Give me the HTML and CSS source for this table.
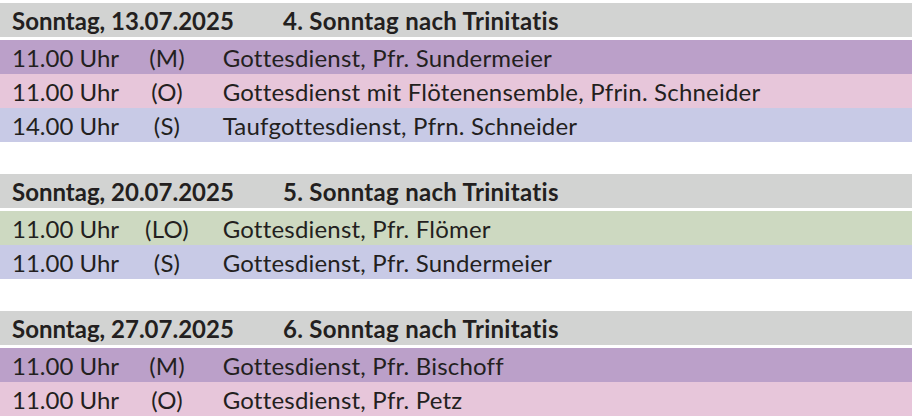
FILE: index.html
```html
<!DOCTYPE html>
<html lang="de">
<head>
<meta charset="utf-8">
<title>Gottesdienste</title>
<link rel="stylesheet" href="styles.css">
</head>
<body>
<main class="plan">
  <section class="day">
    <div class="day-head"><span class="date">Sonntag, 13.07.2025</span><span class="name">4. Sonntag nach Trinitatis</span></div>
    <div class="row purple"><span class="time">11.00 Uhr</span><span class="code">(M)</span><span class="desc">Gottesdienst, Pfr. Sundermeier</span></div>
    <div class="row pink"><span class="time">11.00 Uhr</span><span class="code">(O)</span><span class="desc">Gottesdienst mit Flötenensemble, Pfrin. Schneider</span></div>
    <div class="row blue"><span class="time">14.00 Uhr</span><span class="code">(S)</span><span class="desc">Taufgottesdienst, Pfrn. Schneider</span></div>
  </section>
  <section class="day">
    <div class="day-head"><span class="date">Sonntag, 20.07.2025</span><span class="name">5. Sonntag nach Trinitatis</span></div>
    <div class="row green"><span class="time">11.00 Uhr</span><span class="code">(LO)</span><span class="desc">Gottesdienst, Pfr. Flömer</span></div>
    <div class="row blue"><span class="time">11.00 Uhr</span><span class="code">(S)</span><span class="desc">Gottesdienst, Pfr. Sundermeier</span></div>
  </section>
  <section class="day">
    <div class="day-head"><span class="date">Sonntag, 27.07.2025</span><span class="name">6. Sonntag nach Trinitatis</span></div>
    <div class="row purple"><span class="time">11.00 Uhr</span><span class="code">(M)</span><span class="desc">Gottesdienst, Pfr. Bischoff</span></div>
    <div class="row pink"><span class="time">11.00 Uhr</span><span class="code">(O)</span><span class="desc">Gottesdienst, Pfr. Petz</span></div>
  </section>
</main>
</body>
</html>
```
FILE: styles.css
```css
html, body {
  margin: 0;
  padding: 0;
  background: #ffffff;
}
body {
  font-family: Lato, "Open Sans", sans-serif;
  font-size: 24px;
  letter-spacing: 0.2px;
  font-variant-ligatures: none;
  color: #231f20;
}
.plan {
  display: flex;
  flex-direction: column;
  gap: 32px;
  padding-top: 3px;
}
.day {
  display: flex;
  flex-direction: column;
}
.day-head {
  display: flex;
  align-items: center;
  height: 34px;
  margin-bottom: 3px;
  background: #d2d3d2;
  font-weight: bold;
  padding-left: 12px;
}
.day-head .date {
  width: 271px;
  flex: none;
  letter-spacing: 0;
}
.day-head .name {
  letter-spacing: 0.3px;
}
.row {
  display: grid;
  grid-template-columns: 118px 74px 1fr;
  align-items: center;
  height: 34px;
  padding-left: 12px;
}
.time {
  letter-spacing: 0;
}
.code {
  text-align: center;
}
.desc {
  padding-left: 18.7px;
}
.purple { background: #bba0c9; }
.pink { background: #e7c6da; }
.blue { background: #c8cae6; }
.green { background: #cdd9c1; }
```
